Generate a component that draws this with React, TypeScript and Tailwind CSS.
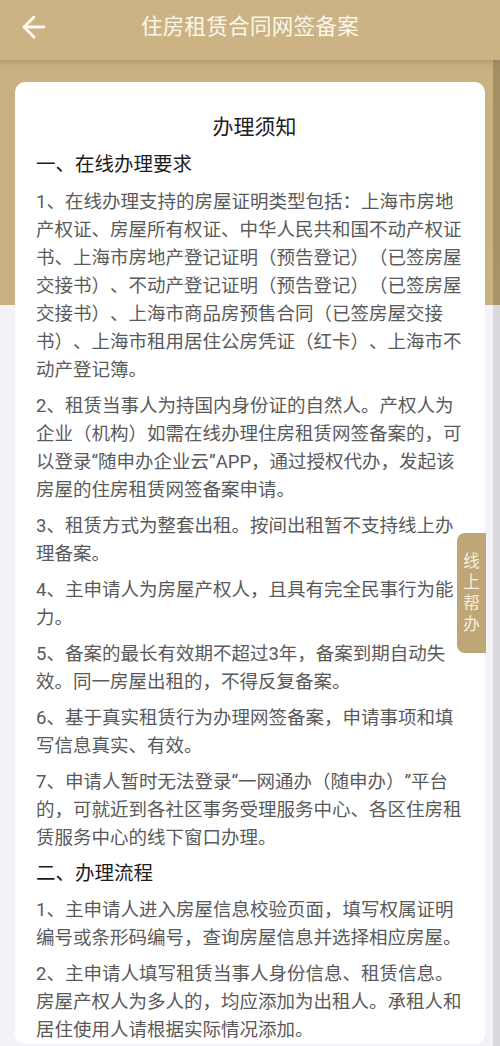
import { ArrowLeft } from 'lucide-react';

const font = { fontFamily: 'Roboto, "Noto Sans CJK SC", sans-serif' };

type Block = { kind: 'h' | 'p'; lines: string[] };

const blocks: Block[] = [
  { kind: 'h', lines: ['一、在线办理要求'] },
  {
    kind: 'p',
    lines: [
      '1、在线办理支持的房屋证明类型包括：上海市房地',
      '产权证、房屋所有权证、中华人民共和国不动产权证',
      '书、上海市房地产登记证明（预告登记）（已签房屋',
      '交接书）、不动产登记证明（预告登记）（已签房屋',
      '交接书）、上海市商品房预售合同（已签房屋交接',
      '书）、上海市租用居住公房凭证（红卡）、上海市不',
      '动产登记簿。',
    ],
  },
  {
    kind: 'p',
    lines: [
      '2、租赁当事人为持国内身份证的自然人。产权人为',
      '企业（机构）如需在线办理住房租赁网签备案的，可',
      '以登录“随申办企业云”APP，通过授权代办，发起该',
      '房屋的住房租赁网签备案申请。',
    ],
  },
  { kind: 'p', lines: ['3、租赁方式为整套出租。按间出租暂不支持线上办', '理备案。'] },
  { kind: 'p', lines: ['4、主申请人为房屋产权人，且具有完全民事行为能', '力。'] },
  { kind: 'p', lines: ['5、备案的最长有效期不超过3年，备案到期自动失', '效。同一房屋出租的，不得反复备案。'] },
  { kind: 'p', lines: ['6、基于真实租赁行为办理网签备案，申请事项和填', '写信息真实、有效。'] },
  {
    kind: 'p',
    lines: [
      '7、申请人暂时无法登录“一网通办（随申办）”平台',
      '的，可就近到各社区事务受理服务中心、各区住房租',
      '赁服务中心的线下窗口办理。',
    ],
  },
  { kind: 'h', lines: ['二、办理流程'] },
  {
    kind: 'p',
    lines: ['1、主申请人进入房屋信息校验页面，填写权属证明', '编号或条形码编号，查询房屋信息并选择相应房屋。'],
  },
  {
    kind: 'p',
    lines: [
      '2、主申请人填写租赁当事人身份信息、租赁信息。',
      '房屋产权人为多人的，均应添加为出租人。承租人和',
      '居住使用人请根据实际情况添加。',
    ],
  },
];

export default function App() {
  return (
    <div
      className="relative w-[500px] h-[1046px] overflow-hidden bg-[#f3f3f7] flex flex-col [text-spacing-trim:space-all]"
      style={font}
    >
      {/* Header */}
      <header className="relative z-10 h-[60px] shrink-0 bg-[#cbb383] flex items-center pb-[6px] shadow-[0_2px_5px_rgba(90,70,30,0.18)]">
        <div className="w-[60px] pl-[17px] flex items-center text-[#fdfaf3]">
          <ArrowLeft size={34} strokeWidth={2} />
        </div>
        <h1 className="flex-1 text-center text-[21.5px] text-[#fcf7ec] leading-none tracking-[0.3px] pr-[60px]">
          住房租赁合同网签备案
        </h1>
      </header>

      {/* Body */}
      <div className="flex flex-1 min-h-0">
        <main className="flex-1 min-w-0 bg-[linear-gradient(to_bottom,#c4ab7b_0px,#c9b182_12px,#c9b182_245px,#f3f3f7_245px)]">
          <section className="mt-[22px] ml-[15px] mr-[8px] bg-white rounded-[10px] pt-[30px] pl-[21px] pr-[12px]">
            <h2 className="text-center text-[21px] leading-[30px] text-[#202020] font-normal">办理须知</h2>
            <div className="mt-[9px] flex flex-col gap-[8px]">
              {blocks.map((b, i) =>
                b.kind === 'h' ? (
                  <h3 key={i} className="text-[19.5px] leading-[28px] text-[#1c1c1c] font-normal whitespace-nowrap">
                    {b.lines[0]}
                  </h3>
                ) : (
                  <p
                    key={i}
                    className={`text-[18.5px] leading-[28px] text-[#5a5a5a] whitespace-nowrap ${i === 1 ? 'mt-[1px]' : ''}`}
                  >
                    {b.lines.map((l, j) => (
                      <span key={j} className="block">
                        {l}
                      </span>
                    ))}
                  </p>
                )
              )}
            </div>
          </section>
        </main>
        <div className="w-[7px] shrink-0 bg-[linear-gradient(to_bottom,#a48e66_0px,#a8936b_245px,#dadade_245px)]" />
      </div>

      {/* Floating help tab */}
      <div className="absolute left-[457px] top-[533px] w-[29px] h-[120px] rounded-l-[8px] bg-[#bfa677] flex flex-col items-center justify-center text-[16.5px] leading-[21px] text-[#f6efe0]">
        <span>线</span>
        <span>上</span>
        <span>帮</span>
        <span>办</span>
      </div>
    </div>
  );
}
